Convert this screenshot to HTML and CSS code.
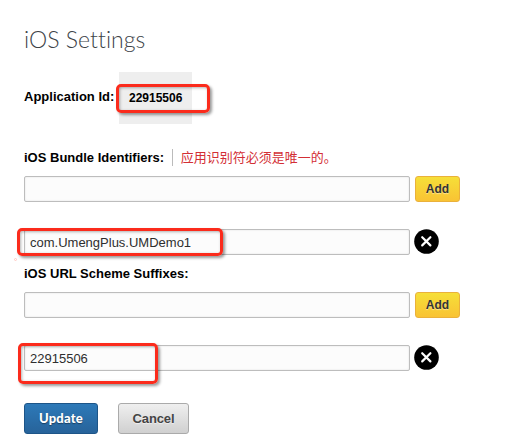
FILE: index.html
```html
<!DOCTYPE html>
<html lang="en">
<head>
<meta charset="utf-8">
<title>iOS Settings</title>
<link rel="stylesheet" href="styles.css">
</head>
<body>
<main class="settings">
  <h1 class="title"><span>iOS Settings</span></h1>
  <div class="app-row">
    <span class="label app-label">Application Id:</span>
    <span class="app-id"><span>22915506</span><i class="mark mark-app"></i></span>
  </div>
  <div class="label-row first">
    <span class="label bundle-label">iOS Bundle Identifiers:</span>
    <span class="error">应用识别符必须是唯一的。</span>
  </div>
  <div class="field-row">
    <div class="field"></div>
    <button class="btn add">Add</button>
  </div>
  <div class="field-row saved">
    <div class="field"><span class="bundle-value">com.UmengPlus.UMDemo1</span><i class="mark mark-bundle"></i><i class="speck"></i></div>
    <svg class="remove" viewBox="0 0 25 25"><circle cx="12.5" cy="12.5" r="12.3"/><path d="M8.2 8.2 16.4 16.4M16.4 8.2 8.2 16.4"/></svg>
  </div>
  <div class="label-row second">
    <span class="label suffix-label">iOS URL Scheme Suffixes:</span>
  </div>
  <div class="field-row">
    <div class="field"></div>
    <button class="btn add">Add</button>
  </div>
  <div class="field-row saved">
    <div class="field"><span class="suffix-value">22915506</span><i class="mark mark-suffix"></i></div>
    <svg class="remove" viewBox="0 0 25 25"><circle cx="12.5" cy="12.5" r="12.3"/><path d="M8.2 8.2 16.4 16.4M16.4 8.2 8.2 16.4"/></svg>
  </div>
  <div class="actions">
    <button class="btn update">Update</button>
    <button class="btn cancel">Cancel</button>
  </div>
</main>
</body>
</html>
```
FILE: styles.css
```css
* { box-sizing: border-box; }
body {
  margin: 0;
  background: #fff;
  font-family: "Liberation Sans", Arial, "Noto Sans CJK SC", sans-serif;
  font-size: 13px;
  color: #000;
}
.settings { padding: 23px 0 0 24px; height: 447px; overflow: hidden; }
.title {
  margin: 0;
  height: 49px;
  font: 300 23px/32px Lato, sans-serif;
  letter-spacing: 0.05px;
  color: #3d4348;
}
.label { font-weight: bold; white-space: nowrap; }
.app-row { display: flex; height: 52px; }
.app-label { width: 95px; line-height: 50px; }
.app-id {
  position: relative;
  width: 73px;
  padding-left: 10px;
  background: #eee;
  font-weight: bold;
  font-size: 12px;
  line-height: 52px;
}
.label-row { display: flex; align-items: center; height: 17px; }
.first { margin: 25px 0 10px; }
.second { margin: 10px 0; }
.error {
  height: 17px;
  margin-left: 8px;
  padding-left: 7.5px;
  border-left: 1px solid #bbb;
  font-family: "Noto Sans CJK SC", sans-serif;
  line-height: 15px;
  color: #d32f35;
  white-space: nowrap;
}
.field-row { display: flex; height: 26px; gap: 5px; }
.saved { margin-top: 27px; }
.field {
  position: relative;
  width: 386px;
  padding-left: 5px;
  border: 1px solid #bdbdbd;
  border-radius: 2px;
  background: #fcfcfc;
  box-shadow: inset 0 0 2px #ddd;
  line-height: 25px;
  color: #2e2e2e;
  white-space: nowrap;
}
.remove { width: 25px; height: 25px; margin-left: -1px; }
.remove path { fill: none; stroke: #fff; stroke-width: 2.2; stroke-linecap: round; }
.btn {
  padding: 0;
  border: 1px solid;
  border-radius: 3px;
  font: bold 13px "Liberation Sans", Arial, sans-serif;
}
.add {
  width: 45px;
  height: 26px;
  border-color: #eab13b;
  background: linear-gradient(#f6df38, #f9c334);
  color: #333;
  font-size: 12px;
  text-shadow: 0 1px 1px rgba(255, 255, 255, .5);
}
.actions { display: flex; gap: 20px; margin-top: 32px; }
.update {
  width: 74px;
  height: 31px;
  padding-bottom: 2px;
  border-color: #1d5588;
  background: linear-gradient(#2d79b8, #27639a);
  color: #fff;
  font: 900 13px Lato, sans-serif;
  letter-spacing: 0.2px;
  text-shadow: 0 1px 1px rgba(0, 0, 0, .4);
}
.cancel {
  width: 71px;
  height: 31px;
  border-color: #aaa;
  background: linear-gradient(#efefef, #d0d0d0);
  color: #444;
  letter-spacing: -0.1px;
  text-shadow: 0 1px 1px rgba(255, 255, 255, .6);
}
.mark {
  position: absolute;
  border: 3px solid #fb2b1c;
  border-radius: 5px;
  box-shadow: 2px 2px 3px rgba(0, 0, 0, .4), inset 1px 1px 3px rgba(0, 0, 0, .3);
}
.mark-app { left: -3px; top: 12px; width: 94px; height: 29px; }
.mark-bundle { left: -8px; top: -2px; width: 206px; height: 28px; }
.mark-suffix { left: -7px; top: -3px; width: 140px; height: 41px; }
.speck {
  position: absolute;
  left: -11px;
  top: 28px;
  width: 3px;
  height: 3px;
  border: 1px solid #ffc9c4;
  border-radius: 50%;
}
```
